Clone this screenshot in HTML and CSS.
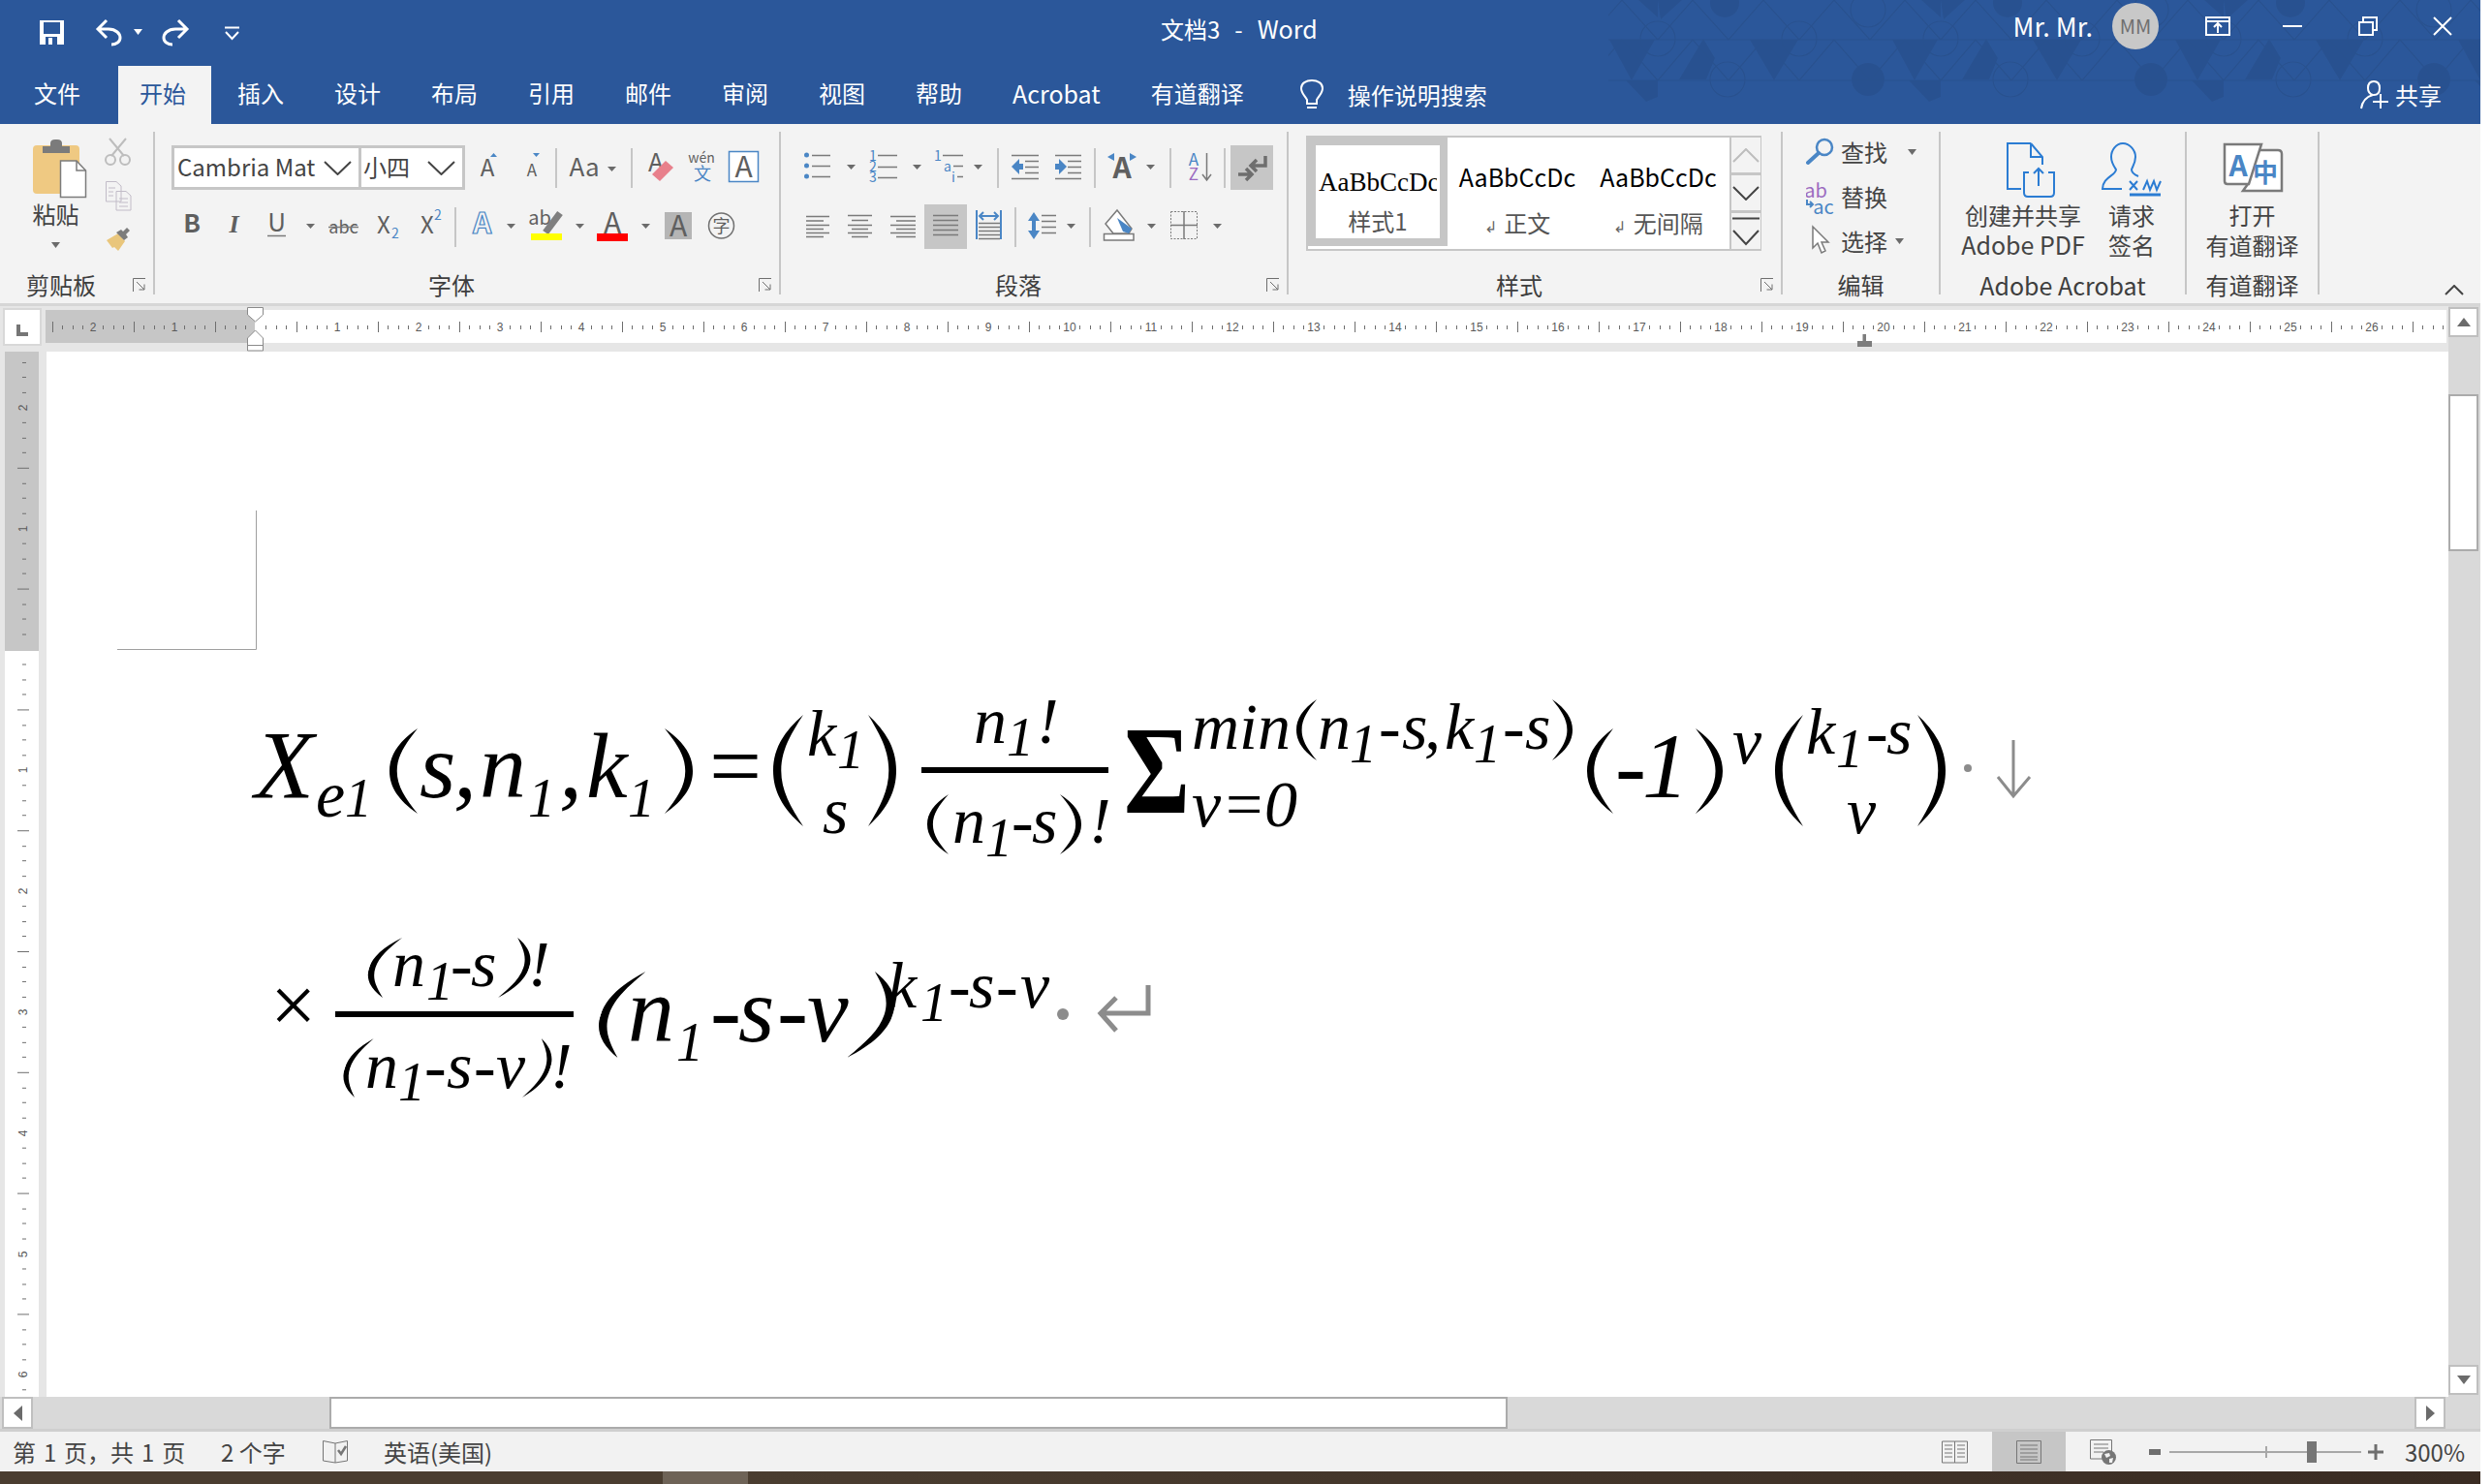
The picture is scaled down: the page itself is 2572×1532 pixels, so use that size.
FILE: index.html
```html
<!DOCTYPE html>
<html lang="zh-CN">
<head>
<meta charset="utf-8">
<title>文档3 - Word</title>
<link rel="stylesheet" href="styles.css">
</head>
<body>
<div class="app">
  <header class="header">
    <svg class="geo" width="900" height="128" viewBox="1660 0 900 128" aria-hidden="true">
      <defs>
        <pattern id="geo-tile" patternUnits="userSpaceOnUse" x="1711" y="0" width="292" height="128">
          <path class="geo-dark" d="M22 82L47 40 59 60 50 82ZM95 41H145L120 83ZM242 41H289L265 83ZM259 83H292V100L280 105ZM272 0H292V18ZM0 0H25L3 20Z"/>
          <circle class="geo-dark" cx="217" cy="82" r="17"/>
          <circle class="geo-dark" cx="69" cy="3" r="15"/>
          <path class="geo-line" d="M0 41H292M0 83H292M0 83L36 41 73 83 109 41 146 83 182 41 219 83 255 41 292 83M0 41L36 0 73 41 109 0 146 41 182 0 219 41 255 0 292 41"/>
          <circle class="geo-line" cx="0" cy="40" r="18"/><circle class="geo-line" cx="292" cy="40" r="18"/>
          <circle class="geo-line" cx="146" cy="40" r="18"/>
          <circle class="geo-line" cx="72" cy="82" r="18"/>
          <circle class="geo-line" cx="217" cy="10" r="18"/>
        </pattern>
      </defs>
      <rect x="1660" width="900" height="128" fill="url(#geo-tile)"/>
    </svg>
    <div class="titlebar">
      <div class="qat">
        <svg width="80" height="68" viewBox="0 0 80 68"><path class="w-fill" d="M41 21H66V46H41Z"/><path class="b-fill" d="M45 23H62V35H45ZM47 38H59V46H47Z"/><path class="w-fill" d="M50 39H54V46H50Z"/></svg>
        <svg width="75" height="68" viewBox="80 0 75 68"><path class="w-line" d="M110 21L101 30 110 39M101 30H112C120 30 124 35 124 39 124 43 120 46 115 46"/><path class="w-fill" d="M138 30H147L142.500 36Z"/></svg>
        <svg width="50" height="68" viewBox="155 0 50 68"><path class="w-line" d="M184 21L193 30 184 39M193 30H181C173 30 169 35 169 39 169 43 173 46 178 46"/></svg>
        <svg width="55" height="68" viewBox="205 0 55 68"><path class="w-thin" d="M232 28.500H247M233 33L239.500 40 246 33"/></svg>
      </div>
      <div class="doc-title">文档3<span class="title-dash">-</span><span class="latin">Word</span></div>
      <div class="account">
        <span class="user-name">Mr. Mr.</span>
        <span class="avatar">MM</span>
        <span class="winbtn"><svg width="26" height="20" viewBox="0 0 26 20"><path class="w-thin" d="M1 1H25V19H1ZM1 5H25M13 17V8M9 11L13 7 17 11"/></svg></span>
        <span class="winbtn"><svg width="20" height="4" viewBox="0 0 20 4"><path class="w-thin" d="M0 2H20"/></svg></span>
        <span class="winbtn"><svg width="20" height="20" viewBox="0 0 20 20"><path class="w-thin" d="M1 6H15V19H1ZM5 6V1H19V14H15"/></svg></span>
        <span class="winbtn"><svg width="20" height="20" viewBox="0 0 20 20"><path class="w-thin" d="M1 1L19 19M19 1L1 19"/></svg></span>
      </div>
    </div>
    <nav class="tabs">
      <span class="tab tab-file">文件</span>
      <span class="tab tab-active">开始</span>
      <span class="tab">插入</span>
      <span class="tab">设计</span>
      <span class="tab">布局</span>
      <span class="tab">引用</span>
      <span class="tab">邮件</span>
      <span class="tab">审阅</span>
      <span class="tab">视图</span>
      <span class="tab">帮助</span>
      <span class="tab latin">Acrobat</span>
      <span class="tab">有道翻译</span>
      <span class="tell">
        <svg width="24" height="32" viewBox="0 0 24 32"><path class="w-thin" d="M7 21C4 16 1 14 1 9 1 4 6 1 12 1 18 1 23 4 23 9 23 14 20 16 17 21V25H7ZM7 29H17"/></svg>
        操作说明搜索
      </span>
      <span class="share">
        <svg width="29" height="30" viewBox="0 0 29 30"><path class="w-thin" d="M14 1C10 1 8 4 8 8 8 12 10 14 13 15 6 17 2 22 1 29M14 1C18 1 20 4 20 8 20 12 18 15 14 15M21 14V29M13 22H29"/></svg>
        共享
      </span>
    </nav>
  </header>

  <section class="ribbon">
    <div class="group g-clip">
      <div class="group-body clip-body">
        <div class="paste">
          <svg width="95" height="66" viewBox="10 140 95 66">
            <path fill="#efc982" d="M38 150H78Q82 150 82 154V200H38Q34 200 34 196V154Q34 150 38 150Z"/>
            <path fill="#7b7b7b" d="M44 151H52V148Q52 144 57 144H59Q64 144 64 148V151H72V158H44Z"/>
            <path fill="#fff" stroke="#7b7b7b" stroke-width="1.500" d="M62.500 166H79L88.500 176V203.500H62.500Z"/>
            <path fill="none" stroke="#7b7b7b" stroke-width="1.500" d="M79 166V176H88.500"/>
          </svg>
          <span class="paste-label">粘贴</span>
          <svg class="caret-down" width="9" height="6" viewBox="0 0 9 6"><path class="g-fill" d="M0 0H9L4.500 6Z"/></svg>
        </div>
        <div class="clip-small">
          <svg width="35" height="40" viewBox="105 140 35 40"><path class="dis" d="M113 143L128 161M130 143L115 161"/><circle class="dis" cx="114" cy="165" r="5"/><circle class="dis" cx="129" cy="165" r="5"/></svg>
          <svg width="35" height="44" viewBox="105 180 35 44"><path class="dis-p" d="M109.500 187.500H120L125 192V208H109.500ZM120 197.500H130L135 202V217H120ZM112 194H119M112 198H117M112 202H117M123 205H132M123 209H132M123 213H132"/></svg>
          <svg width="35" height="40" viewBox="105 224 35 40"><path fill="#e9c67c" d="M110 248L122 241 129 249 122 259 118 255 116 256Z"/><path fill="#7c7c7c" d="M120 240L125 237 127 239 131 235 134 238 130 242 132 245 128 248Z"/></svg>
        </div>
      </div>
      <div class="group-label"><span>剪贴板</span><svg class="launch" width="14" height="14" viewBox="0 0 14 14"><path d="M.5 14V.5H13M4 4L12 12M12 6.500V12H6.500"/></svg></div>
    </div>

    <div class="group g-font">
      <div class="group-body rows">
        <div class="row">
          <div class="combo">
            <div class="combo-font"><span class="combo-text">Cambria Mat</span><svg width="29" height="15" viewBox="0 0 29 15"><path class="chev" d="M1 1L14.500 14 28 1"/></svg></div>
            <div class="combo-size"><span class="combo-text">小四</span><svg width="29" height="15" viewBox="0 0 29 15"><path class="chev" d="M1 1L14.500 14 28 1"/></svg></div>
          </div>
          <svg width="46" height="46" viewBox="480 150 46 46"><text class="i t24" x="503" y="182">A</text><path class="b-ic" d="M506 162L509.500 158 513 162Z"/></svg>
          <svg width="47" height="46" viewBox="526 150 47 46"><text class="i t17" x="549" y="182">A</text><path class="b-ic" d="M550 158H557L553.500 162Z"/></svg>
          <i class="vsep"></i>
          <svg width="76" height="46" viewBox="575 150 76 46"><text class="i t26" x="603" y="182">Aa</text><path class="g-fill" d="M627 172H636L631.500 177Z"/></svg>
          <i class="vsep"></i>
          <svg width="50" height="46" viewBox="653 150 50 46"><text class="i t26" x="677" y="177">A</text><path fill="#e8808c" d="M687 166L695 173 681 187 673 180Z"/></svg>
          <svg width="42" height="46" viewBox="703 150 42 46"><text class="i t14" x="724" y="168">wén</text><text class="i t18 blue" x="725" y="186">文</text></svg>
          <svg width="45" height="46" viewBox="745 150 45 46"><path fill="#fff" stroke="#4a86c5" stroke-width="1.500" d="M752.500 156.500H782.500V187.500H752.500Z"/><text class="i t30" x="767.500" y="183">A</text></svg>
        </div>
        <div class="row">
          <svg width="43" height="46" viewBox="177 211 43 46"><text class="i t26 bold" x="198" y="240">B</text></svg>
          <svg width="44" height="46" viewBox="220 211 44 46"><text class="i t26 ser-it" x="241.500" y="240">I</text></svg>
          <svg width="48" height="46" viewBox="264 211 48 46"><text class="i t26" x="285.500" y="239">U</text><path class="g-line" d="M276 243.500H295"/></svg>
          <svg width="18" height="46" viewBox="312 211 18 46"><path class="g-fill" d="M316 231H325L320.500 236Z"/></svg>
          <svg width="50" height="46" viewBox="330 211 50 46"><text class="i t18" x="354.500" y="241">abc</text><path class="g-line" d="M339 234.500H370"/></svg>
          <svg width="42" height="46" viewBox="380 211 42 46"><text class="i t24" x="396" y="241">X</text><text class="i t14 blue" x="408" y="246">2</text></svg>
          <svg width="47" height="46" viewBox="422 211 47 46"><text class="i t24" x="441" y="241">X</text><text class="i t14 blue" x="452" y="227">2</text></svg>
          <i class="vsep"></i>
          <svg width="69" height="46" viewBox="471 211 69 46"><text class="i t30 outline" x="497.500" y="241">A</text><path class="g-fill" d="M523 231H532L527.500 236Z"/></svg>
          <svg width="70" height="46" viewBox="540 211 70 46"><text class="i t20" x="557" y="232">ab</text><path class="pen" d="M578 220L563 240"/><path fill="#ff0" d="M548 241H580V248H548Z"/><path class="g-fill" d="M594 231H603L598.500 236Z"/></svg>
          <svg width="70" height="46" viewBox="610 211 70 46"><text class="i t30" x="632" y="241">A</text><path fill="#f00" d="M616 241H648V249H616Z"/><path class="g-fill" d="M662 231H671L666.500 236Z"/></svg>
          <svg width="42" height="46" viewBox="680 211 42 46"><path fill="#b5b5b5" d="M686 219H714V247H686Z"/><text class="i t30" x="700" y="244">A</text></svg>
          <svg width="43" height="46" viewBox="722 211 43 46"><circle cx="744.500" cy="233" r="13" fill="none" stroke="#707070" stroke-width="1.500"/><text class="i t18" x="744.500" y="240">字</text></svg>
        </div>
      </div>
      <div class="group-label"><span>字体</span><svg class="launch" width="14" height="14" viewBox="0 0 14 14"><path d="M.5 14V.5H13M4 4L12 12M12 6.500V12H6.500"/></svg></div>
    </div>

    <div class="group g-para">
      <div class="group-body rows">
        <div class="row">
          <svg width="84" height="46" viewBox="806 150 84 46"><path class="b-ic" d="M830 160a2.500 2.500 0 1 0 5 0a2.500 2.500 0 1 0 -5 0M830 171a2.500 2.500 0 1 0 5 0a2.500 2.500 0 1 0 -5 0M830 182a2.500 2.500 0 1 0 5 0a2.500 2.500 0 1 0 -5 0"/><path class="g-line" d="M838 160.500H857M838 171.500H857M838 182.500H857"/><path class="g-fill" d="M874 170H883L878.500 175Z"/></svg>
          <svg width="68" height="46" viewBox="890 150 68 46"><text class="i t14 blue" x="901" y="166">1</text><text class="i t14 blue" x="901" y="177">2</text><text class="i t14 blue" x="901" y="188">3</text><path class="g-line" d="M906 160.500H926M906 172.500H926M906 183.500H926"/><path class="g-fill" d="M942 170H951L946.500 175Z"/></svg>
          <svg width="71" height="46" viewBox="958 150 71 46"><text class="i t14 blue" x="968" y="166">1</text><text class="i t14 blue" x="978" y="177">a</text><text class="i t14 blue" x="984" y="188">i</text><path class="g-line" d="M973 160.500H994M984 171.500H994M988 182.500H994"/><path class="g-fill" d="M1005 170H1014L1009.500 175Z"/></svg>
          <i class="vsep"></i>
          <svg width="49" height="46" viewBox="1031 150 49 46"><path class="g-line" d="M1044 160.500H1072M1058 166.500H1072M1058 172.500H1072M1058 178.500H1072M1044 184.500H1072"/><path class="b-ic" d="M1044 172L1052 164V169H1056V175H1052V180Z"/></svg>
          <svg width="49" height="46" viewBox="1080 150 49 46"><path class="g-line" d="M1089 160.500H1116M1102 166.500H1116M1102 172.500H1116M1102 178.500H1116M1089 184.500H1116"/><path class="b-ic" d="M1101 172L1093 164V169H1089V175H1093V180Z"/></svg>
          <i class="vsep"></i>
          <svg width="76" height="46" viewBox="1131 150 76 46"><text class="i t30 bold" x="1158" y="184">A</text><path class="b-ic" d="M1143 162L1150 158V166ZM1173 162L1166 158V166Z"/><path class="g-fill" d="M1183 170H1192L1187.500 175Z"/></svg>
          <i class="vsep"></i>
          <svg width="54" height="46" viewBox="1209 150 54 46"><text class="i t17 blue" x="1232" y="171">A</text><text class="i t17 purple" x="1232" y="186">Z</text><path class="g-line" d="M1245.500 158V185M1241 180L1245.500 186 1250 180"/></svg>
          <i class="vsep"></i>
          <svg class="btn-on pilcrow" width="44" height="46" viewBox="1270 150 44 46"><path class="arrow-g" d="M1306 161V171H1291M1297 165L1291 171 1297 177M1278 180H1292M1286 174L1292 180 1286 186"/></svg>
        </div>
        <div class="row">
          <svg width="60" height="46" viewBox="806 211 60 46"><path class="g-line" d="M832 223.500H856M832 228H850M832 232.500H856M832 236.500H850M832 240.500H856M832 244.500H850"/></svg>
          <svg width="44" height="46" viewBox="866 211 44 46"><path class="g-line" d="M875 222.500H900M879 227.500H896M875 232.500H900M879 236.500H896M875 240.500H900M879 244.500H896"/></svg>
          <svg width="44" height="46" viewBox="910 211 44 46"><path class="g-line" d="M919 223.500H945M925 228H945M919 232.500H945M925 236.500H945M919 240.500H945M925 244.500H945"/></svg>
          <svg class="btn-on" width="44" height="46" viewBox="954 211 44 46"><path class="g-line" d="M963 222.500H989M963 227.500H989M963 232.500H989M963 237.500H989M963 242.500H989"/></svg>
          <svg width="49" height="46" viewBox="998 211 49 46"><path class="blue-line" d="M1008 217V247M1033 217V247M1011 223H1030M1015 219L1011 223 1015 227M1026 219L1030 223 1026 227"/><path class="g-line" d="M1010 230.500H1032M1010 234.500H1032M1010 238.500H1032M1010 242.500H1032M1010 246.500H1032"/></svg>
          <i class="vsep"></i>
          <svg width="75" height="46" viewBox="1049 211 75 46"><path class="b-ic" d="M1067 219L1073 228H1069V238H1073L1067 247 1061 238H1065V228H1061Z"/><path class="g-line" d="M1075 222.500H1090M1075 228.500H1090M1075 234.500H1090M1075 240.500H1090"/><path class="g-fill" d="M1101 231H1110L1105.500 236Z"/></svg>
          <i class="vsep"></i>
          <svg width="74" height="46" viewBox="1126 211 74 46"><path fill="#fff" stroke="#7a7a7a" stroke-width="1.500" d="M1139.500 241.500H1170V248H1139.500Z"/><path fill="#fff" stroke="#7a7a7a" stroke-width="1.500" d="M1153 217L1168 236 1165 241H1149L1141 231Z"/><path fill="#4a86c5" d="M1153 225L1168 236 1165 241 1159 239Z"/><path class="g-fill" d="M1184 231H1193L1188.500 236Z"/></svg>
          <svg width="70" height="46" viewBox="1200 211 70 46"><path class="dots" d="M1208.500 218.500H1235.500V246.500H1208.500Z"/><path class="g-line" d="M1222 218V247M1208 232.500H1236"/><path class="g-fill" d="M1252 231H1261L1256.500 236Z"/></svg>
        </div>
      </div>
      <div class="group-label"><span>段落</span><svg class="launch" width="14" height="14" viewBox="0 0 14 14"><path d="M.5 14V.5H13M4 4L12 12M12 6.500V12H6.500"/></svg></div>
    </div>

    <div class="group g-style">
      <div class="group-body">
        <div class="gallery">
          <div class="style-item style-on">
            <span class="style-sample sample-serif">AaBbCcDc</span>
            <span class="style-name">样式1</span>
          </div>
          <div class="style-item">
            <span class="style-sample">AaBbCcDc</span>
            <span class="style-name"><small class="para-mark">↲</small> 正文</span>
          </div>
          <div class="style-item style-wide">
            <span class="style-sample">AaBbCcDc</span>
            <span class="style-name"><small class="para-mark">↲</small> 无间隔</span>
          </div>
          <div class="gallery-btns">
            <span class="gbtn"><svg width="28" height="15" viewBox="0 0 28 15"><path class="chev chev-off" d="M1 14L14 1 27 14"/></svg></span>
            <span class="gbtn"><svg width="28" height="15" viewBox="0 0 28 15"><path class="chev" d="M1 1L14 14 27 1"/></svg></span>
            <span class="gbtn gbtn-more"><svg width="30" height="30" viewBox="0 0 30 30"><path class="chev" d="M1 1.500H29M2 14L15 28 28 14"/></svg></span>
          </div>
        </div>
      </div>
      <div class="group-label"><span>样式</span><svg class="launch" width="14" height="14" viewBox="0 0 14 14"><path d="M.5 14V.5H13M4 4L12 12M12 6.500V12H6.500"/></svg></div>
    </div>

    <div class="group g-edit">
      <div class="group-body edit-body">
        <div class="edit-row">
          <svg width="36" height="42" viewBox="1864 136 36 42"><circle cx="1883" cy="152" r="8" fill="none" stroke="#4a86c5" stroke-width="2.500"/><path class="blue-thick" d="M1877 158L1866 168"/></svg>
          <span>查找</span>
          <svg class="caret-a" width="9" height="6" viewBox="0 0 9 6"><path class="g-fill" d="M0 0H9L4.500 6Z"/></svg>
        </div>
        <div class="edit-row">
          <svg width="36" height="42" viewBox="1864 182 36 42"><text class="i t20 purple" x="1874" y="204">ab</text><text class="i t20 blue" x="1882" y="221">ac</text><path class="blue-line" d="M1865 206V211H1871M1868 208L1871 211 1868 214"/></svg>
          <span>替换</span>
        </div>
        <div class="edit-row">
          <svg width="36" height="42" viewBox="1864 228 36 42"><path fill="#fff" stroke="#7a7a7a" stroke-width="1.500" d="M1871 234V256L1876 251 1880 261 1884 259 1880 250H1887Z"/></svg>
          <span>选择</span>
          <svg class="caret-b" width="9" height="6" viewBox="0 0 9 6"><path class="g-fill" d="M0 0H9L4.500 6Z"/></svg>
        </div>
      </div>
      <div class="group-label label-center"><span>编辑</span></div>
    </div>

    <div class="group g-acro">
      <div class="group-body big-row">
        <div class="big-btn btn-create">
          <svg width="128" height="66" viewBox="2024 140 128 66"><path class="acro" d="M2096 148H2072V195H2086M2096 148L2108 162V170M2096 148V162H2108M2094 178H2089V199Q2089 203 2093 203H2116Q2120 203 2120 199V178H2114M2104 192V174M2099 179L2104 174 2109 179"/></svg>
          <span>创建并共享</span>
          <span class="latin">Adobe PDF</span>
        </div>
        <div class="big-btn btn-sign">
          <svg width="64" height="66" viewBox="2167 140 64 66"><path class="acro" d="M2190 148C2183 148 2178 155 2178 162 2178 168 2181 172 2183 175 2183 181 2169 183 2169 195H2189M2190 148C2197 148 2203 155 2203 162 2203 168 2200 172 2199 175 2199 178 2201 180 2206 182M2197 187L2205 196M2205 187L2197 196M2211 196L2215 187 2218 196 2222 187 2225 196 2229 187"/><path class="acro-thick" d="M2197 201H2229"/></svg>
          <span>请求</span>
          <span>签名</span>
        </div>
      </div>
      <div class="group-label label-center"><span class="latin">Adobe Acrobat</span></div>
    </div>

    <div class="group g-you">
      <div class="group-body big-row big-center">
        <div class="big-btn">
          <svg width="64" height="66" viewBox="2293 140 64 66"><path fill="#fff" stroke="#7a7a7a" stroke-width="2.500" d="M2322 155H2351Q2355 155 2355 159V197H2315L2320 190"/><path fill="#fff" stroke="#7a7a7a" stroke-width="2.500" d="M2296 149H2334L2321 190H2299Q2296 190 2296 187Z"/><text class="i t30 blue bold" x="2310" y="182">A</text><text class="i t26 blue bold" x="2338" y="188">中</text></svg>
          <span>打开</span>
          <span>有道翻译</span>
        </div>
      </div>
      <div class="group-label label-center"><span>有道翻译</span></div>
    </div>

    <svg class="collapse" width="20" height="11" viewBox="0 0 20 11"><path class="chev" d="M1 10L10 1 19 10"/></svg>
  </section>

  <div class="work">
    <div class="ruler-row">
      <div class="ruler-corner"><svg width="12" height="12" viewBox="0 0 12 12"><path fill="#767676" d="M0 0H4V8H12V12H0Z"/></svg></div>
      <svg class="h-ruler" width="2478" height="34" viewBox="47 320 2478 34">
        <defs>
          <pattern id="h-ticks" patternUnits="userSpaceOnUse" x="264" y="320" width="84" height="34">
            <path class="tick" d="M10.500 16V20M21.500 16V20M31.500 16V20M42.500 12V23M52.500 16V20M63.500 16V20M73.500 16V20"/>
          </pattern>
        </defs>
        <rect x="47" y="320" width="216" height="34" fill="#c6c6c6"/>
        <rect x="263" y="320" width="2262" height="34" fill="#fff"/>
        <rect x="47" y="320" width="2478" height="34" fill="url(#h-ticks)"/>
        <g class="rl">
          <text x="96" y="342">2</text><text x="180" y="342">1</text><text x="348" y="342">1</text><text x="432" y="342">2</text><text x="516" y="342">3</text><text x="600" y="342">4</text><text x="684" y="342">5</text><text x="768" y="342">6</text><text x="852" y="342">7</text><text x="936" y="342">8</text><text x="1020" y="342">9</text><text x="1104" y="342">10</text><text x="1188" y="342">11</text><text x="1272" y="342">12</text><text x="1356" y="342">13</text><text x="1440" y="342">14</text><text x="1524" y="342">15</text><text x="1608" y="342">16</text><text x="1692" y="342">17</text><text x="1776" y="342">18</text><text x="1860" y="342">19</text><text x="1944" y="342">20</text><text x="2028" y="342">21</text><text x="2112" y="342">22</text><text x="2196" y="342">23</text><text x="2280" y="342">24</text><text x="2364" y="342">25</text><text x="2448" y="342">26</text>
        </g>
      </svg>
      <svg class="markers" width="17" height="47" viewBox="255 316 17 47"><path class="marker" d="M255.500 317.500H271.500V325L263.500 332 255.500 325ZM263.500 341L271.500 349V362H255.500V349ZM255.500 356.500H271.500"/></svg>
      <svg class="tabstop" width="15" height="13" viewBox="0 0 15 13"><path fill="#7d7d7d" d="M5.500 0H9V7H15V13H0V7H5.500Z"/></svg>
    </div>
    <aside class="vscroll">
      <span class="sb-btn sb-up"><svg width="14" height="9" viewBox="0 0 14 9"><path class="g-fill" d="M0 9L7 0 14 9Z"/></svg></span>
      <span class="sb-thumb"></span>
      <span class="sb-btn sb-down"><svg width="14" height="9" viewBox="0 0 14 9"><path class="g-fill" d="M0 0L7 9 14 0Z"/></svg></span>
    </aside>
    <div class="doc-row">
      <div class="v-rail">
        <svg class="v-ruler" width="35" height="1079" viewBox="5 363 35 1079">
          <defs>
            <pattern id="v-ticks" patternUnits="userSpaceOnUse" x="5" y="670.500" width="35" height="124.800">
              <path class="tick" d="M18 15.500H22M18 31.500H22M18 46.500H22M13 62.500H25M18 78.500H22M18 93.500H22M18 109.500H22"/>
            </pattern>
          </defs>
          <rect x="5" y="363" width="35" height="309" fill="#c6c6c6"/>
          <rect x="5" y="672" width="35" height="770" fill="#fff"/>
          <rect x="5" y="363" width="35" height="1079" fill="url(#v-ticks)"/>
          <g class="rl">
            <text transform="translate(28 421) rotate(-90)">2</text><text transform="translate(28 546) rotate(-90)">1</text><text transform="translate(28 795) rotate(-90)">1</text><text transform="translate(28 920) rotate(-90)">2</text><text transform="translate(28 1045) rotate(-90)">3</text><text transform="translate(28 1170) rotate(-90)">4</text><text transform="translate(28 1295) rotate(-90)">5</text><text transform="translate(28 1419) rotate(-90)">6</text>
          </g>
        </svg>
      </div>
      <svg class="page" width="2479" height="1079" viewBox="48 363 2479 1079">
        <defs>
          <symbol id="lp" viewBox="0 0 30 100" preserveAspectRatio="none"><path d="M30 0C9 16 0 32 0 50 0 68 9 84 30 100 17 82 8 68 8 50 8 32 17 18 30 0Z"/></symbol>
          <symbol id="rp" viewBox="0 0 30 100" preserveAspectRatio="none"><path d="M0 0C21 16 30 32 30 50 30 68 21 84 0 100 13 82 22 68 22 50 22 32 13 18 0 0Z"/></symbol>
        </defs>
        <path class="crop" d="M264.500 527V670.500H121"/>

        <!-- first line -->
        <text class="eq-xl" x="263" y="823">X</text>
        <text class="eq-md" x="326" y="843">e</text><text class="eq-sm" x="356" y="843">1</text>
        <use href="#lp" x="402" y="752" width="29" height="88"/>
        <text class="eq-lg" x="433" y="823">s</text><text class="eq-lg" x="468" y="823">,</text><text class="eq-lg" x="495" y="823">n</text><text class="eq-sm" x="545" y="843">1</text><text class="eq-lg" x="577" y="823">,</text><text class="eq-lg" x="605" y="823">k</text><text class="eq-sm" x="648" y="843">1</text>
        <use href="#rp" x="686" y="752" width="29" height="88"/>
        <text class="eq-up" x="732" y="823">=</text>
        <use href="#lp" x="798" y="738" width="31" height="115"/>
        <text class="eq-md" x="833" y="780">k</text><text class="eq-sm" x="864" y="793">1</text>
        <text class="eq-md" x="849" y="860">s</text>
        <use href="#rp" x="896" y="738" width="29" height="115"/>
        <text class="eq-md" x="1005" y="767">n</text><text class="eq-sm" x="1039" y="780">1</text><text class="eq-md" x="1070" y="767">!</text>
        <rect x="951" y="792" width="193" height="6"/>
        <use href="#lp" x="957" y="820" width="22" height="62"/>
        <text class="eq-md" x="983" y="870">n</text><text class="eq-sm" x="1017" y="884">1</text><text class="eq-md" x="1044" y="870">-</text><text class="eq-md" x="1065" y="870">s</text>
        <use href="#rp" x="1094" y="820" width="22" height="62"/>
        <text class="eq-md" x="1124" y="870">!</text>
        <text class="eq-sum" transform="translate(1160 839) scale(.8 1)">Σ</text>
        <text class="eq-md" x="1230" y="773">min</text>
        <use href="#lp" x="1338" y="722" width="21" height="63"/>
        <text class="eq-md" x="1360" y="773">n</text><text class="eq-sm" x="1393" y="787">1</text><text class="eq-md" x="1423" y="773">-</text><text class="eq-md" x="1447" y="773">s</text><text class="eq-md" x="1470" y="773">,</text><text class="eq-md" x="1491" y="773">k</text><text class="eq-sm" x="1521" y="787">1</text><text class="eq-md" x="1551" y="773">-</text><text class="eq-md" x="1574" y="773">s</text>
        <use href="#rp" x="1602" y="722" width="21" height="63"/>
        <text class="eq-md" x="1230" y="853">v</text><text class="eq-mdup" x="1265" y="853">=</text><text class="eq-md" x="1305" y="853">0</text>
        <use href="#lp" x="1638" y="752" width="27" height="88"/>
        <text class="eq-lg" x="1667" y="823">-</text><text class="eq-lg" x="1695" y="823">1</text>
        <use href="#rp" x="1750" y="752" width="28" height="88"/>
        <text class="eq-md" x="1788" y="788">v</text>
        <use href="#lp" x="1832" y="738" width="29" height="115"/>
        <text class="eq-md" x="1864" y="778">k</text><text class="eq-sm" x="1895" y="792">1</text><text class="eq-md" x="1926" y="778">-</text><text class="eq-md" x="1947" y="778">s</text>
        <text class="eq-md" x="1906" y="860">v</text>
        <use href="#rp" x="1979" y="738" width="29" height="115"/>
        <circle class="mark-dot" cx="2031" cy="793" r="4"/>
        <path class="mark thin" d="M2078 764V820M2062 802L2078 822 2095 802"/>

        <!-- second line -->
        <text class="eq-times" x="279" y="1066">×</text>
        <g transform="translate(371 1030) skewX(-18)"><use href="#lp" x="0" y="-62" width="24" height="62"/></g>
        <text class="eq-md" x="405" y="1018">n</text><text class="eq-sm" x="440" y="1032">1</text><text class="eq-md" x="465" y="1018">-</text><text class="eq-md" x="486" y="1018">s</text>
        <g transform="translate(514 1030) skewX(-18)"><use href="#rp" x="0" y="-62" width="22" height="62"/></g>
        <text class="eq-md" x="545" y="1018">!</text>
        <rect x="346" y="1044" width="246" height="6"/>
        <g transform="translate(346 1133) skewX(-18)"><use href="#lp" x="0" y="-61" width="20" height="61"/></g>
        <text class="eq-md" x="377" y="1123">n</text><text class="eq-sm" x="411" y="1136">1</text><text class="eq-md" x="438" y="1123">-</text><text class="eq-md" x="461" y="1123">s</text><text class="eq-md" x="489" y="1123">-</text><text class="eq-md" x="512" y="1123">v</text>
        <g transform="translate(539 1133) skewX(-18)"><use href="#rp" x="0" y="-61" width="19" height="61"/></g>
        <text class="eq-md" x="568" y="1123">!</text>
        <g transform="translate(605.500 1092) skewX(-18)"><use href="#lp" x="0" y="-89" width="32" height="89"/></g>
        <text class="eq-lg" x="648" y="1075">n</text><text class="eq-sm" x="698" y="1095">1</text><text class="eq-lg" x="733" y="1075">-</text><text class="eq-lg" x="762" y="1075">s</text><text class="eq-lg" x="802" y="1075">-</text><text class="eq-lg" x="833" y="1075">v</text>
        <g transform="translate(874 1092) skewX(-18)"><use href="#rp" x="0" y="-89" width="33" height="89"/></g>
        <text class="eq-md" x="916" y="1040">k</text><text class="eq-sm" x="950" y="1054">1</text><text class="eq-md" x="979" y="1040">-</text><text class="eq-md" x="1000" y="1040">s</text><text class="eq-md" x="1028" y="1040">-</text><text class="eq-md" x="1053" y="1040">v</text>
        <circle class="mark-dot" cx="1097" cy="1047" r="6"/>
        <path class="mark" d="M1185 1017V1046H1136M1152 1030L1136 1046 1152 1064"/>
      </svg>
    </div>
  </div>

  <div class="hscroll">
    <span class="hs-btn hs-left"><svg width="9" height="16" viewBox="0 0 9 16"><path class="g-fill" d="M9 0L0 8 9 16Z"/></svg></span>
    <span class="hs-thumb"></span>
    <span class="hs-btn hs-right"><svg width="9" height="16" viewBox="0 0 9 16"><path class="g-fill" d="M0 0L9 8 0 16Z"/></svg></span>
  </div>

  <footer class="status">
    <span class="st-pages">第 1 页，共 1 页</span>
    <span class="st-words">2 个字</span>
    <svg class="st-proof" width="26" height="24" viewBox="0 0 26 24"><path class="st-i" d="M.5 .5L13 3 25.500 .5V21L13 23 .5 21ZM13 3V23"/><path fill="none" stroke="#767676" stroke-width="2.500" d="M16 10L19 14 24 6"/></svg>
    <span class="st-lang">英语(美国)</span>
    <div class="st-right">
      <span class="view"><svg width="27" height="24" viewBox="0 0 27 24"><path class="st-i" d="M.5 1H13.500V23H.5ZM13.500 1H26.500V23H13.500ZM3 5H11M3 9H11M3 13H11M3 17H11M16 5H24M16 9H24M16 13H24M16 17H24"/></svg></span>
      <span class="view view-on"><svg width="26" height="24" viewBox="0 0 26 24"><path class="st-i" d="M.5 .5H25.500V23.500H.5ZM4 5H22M4 9H22M4 13H22M4 17H22M4 20H22"/></svg></span>
      <span class="view view-web"><svg width="27" height="26" viewBox="0 0 27 26"><path class="st-i" d="M.5 .5H22.500V20H.5ZM4 5H19M4 9H19M4 13H14"/><circle cx="19.500" cy="18.500" r="7.500" fill="#767676"/><path fill="#f2f2f2" d="M15 15L20 14 21 17 17 19ZM20 20L24 19 23 24 20 24Z"/></svg></span>
      <svg width="30" height="6" viewBox="0 0 30 6"><path fill="#6e6e6e" d="M9 0H21V6H9Z"/></svg>
      <svg width="198" height="24" viewBox="0 0 198 24"><path fill="#a8a8a8" d="M0 11H198V13H0ZM99 6H101V18H99Z"/><path fill="#767676" d="M142 1H152V23H142Z"/></svg>
      <svg width="30" height="18" viewBox="0 0 30 18"><path fill="#6e6e6e" d="M7 7.500H23V10.500H7ZM13.500 1H16.500V17H13.500Z"/></svg>
      <span class="st-zoom">300%</span>
    </div>
  </footer>
  <div class="desktop-strip"></div>
</div>
</body>
</html>
```

FILE: styles.css
```css
* { box-sizing: border-box; }
html, body { margin: 0; padding: 0; background: #fff; }
body { font-family: "Noto Sans CJK SC", "Noto Sans", sans-serif; font-size: 24px; color: #444; }
svg { display: block; flex: none; }
small { font-size: inherit; }
.latin { font-size: 25px; }

.app { width: 2560px; height: 1532px; display: flex; flex-direction: column; overflow: hidden; background: #f3f3f3; }

/* header */
.header { position: relative; height: 128px; background: #2b579a; color: #fff; }
.geo { position: absolute; left: 1660px; top: 0; }
.geo-dark { fill: #285190; }
.geo-line { fill: none; stroke: #28518f; stroke-width: 1.2; }
.titlebar { position: relative; height: 68px; display: flex; align-items: flex-start; }
.qat { display: flex; width: 260px; }
.w-fill { fill: #fff; }
.b-fill { fill: #2b579a; }
.w-line { fill: none; stroke: #fff; stroke-width: 3; }
.w-thin { fill: none; stroke: #fff; stroke-width: 2; }
.doc-title { margin-left: 938px; line-height: 58px; white-space: nowrap; }
.title-dash { margin: 0 15px; }
.account { margin-left: auto; display: flex; align-items: center; height: 54px; }
.user-name { margin-right: 20px; font-size: 27px; line-height: 50px; }
.avatar { width: 48px; height: 48px; border-radius: 50%; background: #c8c8c8; color: #6f6f6f; font-size: 20px; line-height: 48px; text-align: center; margin-right: 22px; }
.winbtn { width: 77.5px; display: flex; justify-content: center; }

.tabs { position: relative; height: 60px; display: flex; gap: 4px; padding-left: 13px; line-height: 56px; }
.tab { padding: 0 26px 0 22px; white-space: nowrap; min-width: 96px; }
.tab-file { margin-right: 9px; }
.tab-active { background: #f3f3f3; color: #2b579a; margin-right: 1px; }
.tell { display: flex; align-items: center; gap: 25px; margin-left: 28px; }
.share { margin-left: auto; display: flex; align-items: center; gap: 7px; padding-right: 40px; }

/* ribbon */
.ribbon { height: 188px; padding: 8px 0 9px; border-bottom: 3px solid #d6d6d6; display: flex; background: #f3f3f3; }
.group { height: 168px; border-right: 2px solid #c6c6c6; display: flex; flex-direction: column; flex: none; }
.g-clip { width: 160px; }
.g-font { width: 646px; }
.g-para { width: 524px; }
.g-style { width: 510px; }
.g-edit { width: 163px; }
.g-acro { width: 254px; }
.g-you { width: 137px; }
.group-body { flex: 1; min-height: 0; }
.group-label { height: 24px; margin-bottom: -2px; line-height: 24px; display: flex; align-items: center; white-space: nowrap; color: #3e3e3e; }
.group-label span { flex: 1; text-align: center; padding-right: 11px; }
.label-center span { padding-right: 0; }
.launch { margin-right: 7px; }
.launch path { fill: none; stroke: #6e6e6e; stroke-width: 1; }
.collapse { margin: auto 17px -1px auto; align-self: flex-end; }

.clip-body { display: flex; padding-top: 4px; }
.paste { width: 105px; padding-left: 10px; display: flex; flex-direction: column; align-items: center; }
.paste-label { line-height: 30px; }
.caret-down { margin-top: 14px; }
.clip-small { display: flex; flex-direction: column; }
.dis { fill: none; stroke: #bdbdbd; stroke-width: 2; }
.dis-p { fill: none; stroke: #c2bcc8; stroke-width: 1; }

.rows { padding-top: 14px; display: flex; flex-direction: column; gap: 15px; }
.row { display: flex; height: 46px; align-items: center; }
.g-font .row { padding-left: 17px; }
.vsep { width: 2px; height: 41px; background: #c6c6c6; flex: none; }
.combo { display: flex; width: 303px; height: 46px; border: 3px solid #c6c6c6; background: #fff; flex: none; }
.combo-font, .combo-size { display: flex; align-items: center; }
.combo-font { width: 193px; padding-left: 3px; border-right: 3px solid #c6c6c6; }
.combo-size { flex: 1; padding-left: 2px; }
.combo-text { flex: 1; line-height: 38px; padding-bottom: 2px; white-space: nowrap; color: #444; }
.combo svg { margin-right: 7px; }

.i { font-family: "Noto Sans CJK SC", "Noto Sans", sans-serif; fill: #5f5f5f; text-anchor: middle; }
.t14 { font-size: 14px; }
.t17 { font-size: 17px; }
.t18 { font-size: 18px; }
.t20 { font-size: 20px; }
.t24 { font-size: 24px; }
.t26 { font-size: 26px; }
.t30 { font-size: 30px; }
.bold { font-weight: 700; }
.ser-it { font-family: "Liberation Serif", serif; font-style: italic; font-weight: 700; }
.blue { fill: #4a86c5; }
.purple { fill: #9b6bc0; }
.outline { fill: #f3f3f3; stroke: #4a86c5; stroke-width: 1.2; font-weight: 700; }
.b-ic { fill: #4a86c5; }
.g-fill { fill: #6b6b6b; }
.g-line { fill: none; stroke: #7a7a7a; stroke-width: 1.5; }
.blue-line { fill: none; stroke: #4a86c5; stroke-width: 2; }
.blue-thick { fill: none; stroke: #4a86c5; stroke-width: 4; stroke-linecap: round; }
.pen { fill: none; stroke: #7f7f7f; stroke-width: 7; }
.arrow-g { fill: none; stroke: #6e6e6e; stroke-width: 3.5; }
.dots { fill: none; stroke: #7a7a7a; stroke-width: 1; stroke-dasharray: 2 1.5; }
.chev { fill: none; stroke: #444; stroke-width: 2; }
.chev-off { stroke: #bdbdbd; }
.btn-on { background: #c6c6c6; }
.pilcrow { margin-left: 5px; }

/* styles gallery */
.g-style .group-body { padding: 4px 0 0 18px; }
.gallery { width: 470px; height: 119px; border: 2px solid #c6c6c6; background: #fff; display: flex; }
.style-item { width: 144px; display: flex; flex-direction: column; align-items: center; padding-top: 23px; color: #000; overflow: hidden; flex: none; }
.style-wide { width: 147px; }
.style-sample { font-size: 25px; line-height: 34px; white-space: nowrap; }
.style-name { margin-top: 16px; line-height: 30px; color: #555; white-space: nowrap; }
.para-mark { font-size: 16px; color: #666; margin-right: 2px; }
.style-on { margin: 0; height: 112px; border: 8px solid #c6c6c6; padding-top: 21px; }
.style-on .style-sample { font-family: "Liberation Serif", serif; font-size: 27px; width: 122px; overflow: hidden; }
.style-on .style-name { margin-top: 8px; }
.gallery-btns { flex: 1; display: flex; flex-direction: column; background: #f3f3f3; border-left: 2px solid #c6c6c6; }
.gbtn { height: 39px; display: flex; justify-content: center; align-items: center; border-bottom: 3px solid #c6c6c6; }
.gbtn-more { flex: 1; height: auto; border-bottom: 0; }

/* edit */
.edit-body { padding-left: 24px; display: flex; flex-direction: column; gap: 4px; }
.edit-row { height: 42px; display: flex; align-items: center; line-height: 42px; }
.caret-a { margin-left: 21px; }
.caret-b { margin-left: 8px; }

/* big buttons */
.big-row { display: flex; padding: 4px 0 0 21px; gap: 16px; }
.big-center { padding-left: 0; justify-content: center; }
.big-btn { display: flex; flex-direction: column; align-items: center; line-height: 31px; white-space: nowrap; }
.btn-create { width: 128px; }
.btn-sign { width: 64px; }
.acro { fill: none; stroke: #2b7cd3; stroke-width: 2; }
.acro-thick { fill: none; stroke: #2b7cd3; stroke-width: 3; }

/* work area */
.work { display: grid; grid-template-columns: 2527px 33px; grid-template-rows: 47px 1079px; background: #e6e6e6; }
.ruler-row { position: relative; display: flex; align-items: flex-start; grid-column: 1; grid-row: 1; }
.ruler-corner { width: 40px; height: 39px; margin: 2px 0 0 3px; background: #fff; border: 2px solid #d8d8d8; padding: 15px 0 0 12px; }
.h-ruler { margin: 4px 0 0 4px; }
.markers { position: absolute; left: 255px; top: 0; }
.marker { fill: #fff; stroke: #8a8a8a; stroke-width: 1; }
.tabstop { position: absolute; left: 1917px; top: 29px; }
.tick { fill: none; stroke: #6e6e6e; stroke-width: 1; shape-rendering: crispEdges; }
.rl text { font-family: "Liberation Sans", sans-serif; font-size: 12px; fill: #5a5a5a; text-anchor: middle; }

.vscroll { grid-column: 2; grid-row: 1 / 3; display: flex; flex-direction: column; background: #d9d9d9; width: 33px; }
.sb-btn { width: 31px; height: 31px; background: #fff; border: 2px solid #bfbfbf; display: flex; align-items: center; justify-content: center; flex: none; }
.sb-up { margin-top: 1px; }
.sb-thumb { width: 31px; height: 162px; margin-top: 59px; background: #fff; border: 2px solid #ababab; flex: none; }
.sb-down { margin-top: auto; margin-bottom: 2px; }

.doc-row { grid-column: 1; grid-row: 2; display: flex; background: #fff; }
.v-rail { width: 48px; background: #e6e6e6; padding-left: 5px; flex: none; }
.page { background: #fff; }
.crop { fill: none; stroke: #9f9f9f; stroke-width: 1; }

.eq-xl, .eq-lg, .eq-md, .eq-sm { font-family: "Liberation Serif", "Times New Roman", serif; font-style: italic; fill: #000; }
.eq-xl { font-size: 100px; }
.eq-lg { font-size: 96px; }
.eq-md { font-size: 68px; }
.eq-sm { font-size: 56px; }
.eq-up, .eq-mdup, .eq-sum, .eq-times { font-family: "Liberation Serif", "Times New Roman", serif; fill: #000; }
.eq-up { font-size: 96px; }
.eq-mdup { font-size: 68px; }
.eq-sum { font-size: 130px; font-weight: 700; }
.eq-times { font-size: 84px; }
.mark { fill: none; stroke: #8c8c8c; stroke-width: 5; }
.mark.thin { stroke-width: 3; }
.mark-dot { fill: #8c8c8c; }

/* horizontal scroll */
.hscroll { height: 36px; background: #d9d9d9; border-bottom: 3px solid #cfcfcf; display: flex; align-items: flex-start; padding-top: 0; flex: none; }
.hs-btn { width: 32px; height: 33px; background: #fff; border: 2px solid #bfbfbf; display: flex; align-items: center; justify-content: center; flex: none; }
.hs-left { margin-left: 2px; }
.hs-thumb { width: 1216px; height: 33px; margin-left: 306px; background: #fff; border: 2px solid #ababab; flex: none; }
.hs-right { margin-left: 936px; }

/* status */
.status { height: 41px; background: #f2f2f2; display: flex; align-items: center; padding-left: 13px; line-height: 39px; color: #444; white-space: nowrap; flex: none; }
.st-pages { width: 215px; word-spacing: 2.5px; }
.st-words { width: 105px; }
.st-proof { margin-right: 37px; }
.st-right { margin-left: auto; display: flex; align-items: center; height: 41px; }
.view { width: 76px; height: 41px; display: flex; align-items: center; justify-content: center; }
.view-on { background: #c6c6c6; }
.view-web { width: 77px; }
.st-i { fill: none; stroke: #767676; stroke-width: 1; }
.st-zoom { margin-left: 15px; padding-right: 16px; }
.desktop-strip { height: 13px; flex: none; background: linear-gradient(90deg, #4a3d30 0, #4a3d30 684px, #6e6357 684px, #6e6357 772px, #4a3d30 772px, #3a2c23 100%); }
```
